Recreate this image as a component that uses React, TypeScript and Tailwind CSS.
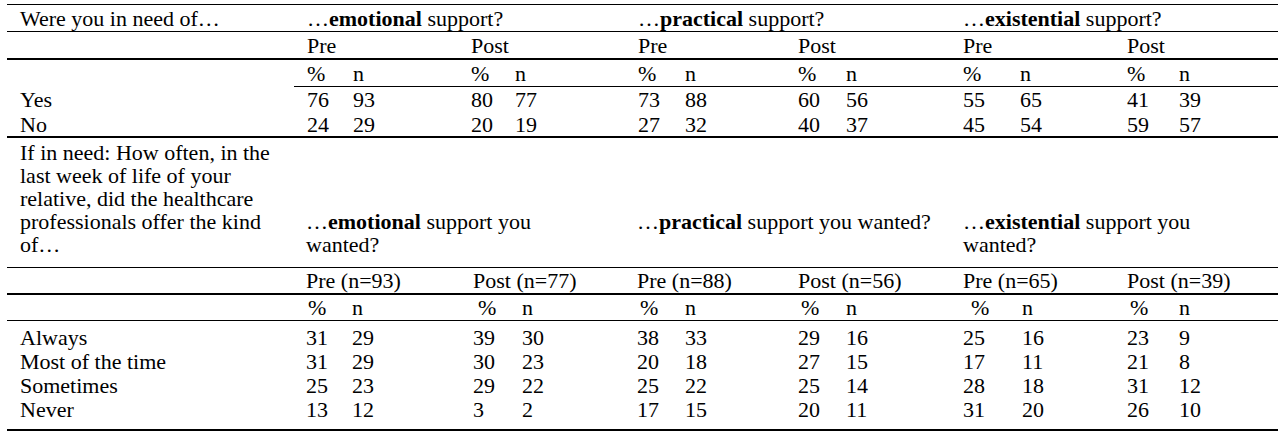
import React from "react";

const S1 =
  "grid grid-cols-[287px_46px_118px_44px_123px_47px_113px_48px_117px_57px_107px_52px_112px]";
const S2 =
  "grid grid-cols-[286px_46px_121px_49px_115px_48px_113px_48px_117px_59px_105px_52px_112px]";

const cell = "pl-[13px] whitespace-nowrap";

type Row = { label: string; vals: (string | number)[] };

const rows1: Row[] = [
  { label: "Yes", vals: [76, 93, 80, 77, 73, 88, 60, 56, 55, 65, 41, 39] },
  { label: "No", vals: [24, 29, 20, 19, 27, 32, 40, 37, 45, 54, 59, 57] },
];

const rows2: Row[] = [
  { label: "Always", vals: [31, 29, 39, 30, 38, 33, 29, 16, 25, 16, 23, 9] },
  { label: "Most of the time", vals: [31, 29, 30, 23, 20, 18, 27, 15, 17, 11, 21, 8] },
  { label: "Sometimes", vals: [25, 23, 29, 22, 25, 22, 25, 14, 28, 18, 31, 12] },
  { label: "Never", vals: [13, 12, 3, 2, 17, 15, 20, 11, 31, 20, 26, 10] },
];

const pctPad2 = [
  "pl-[15px]",
  "pl-[18px]",
  "pl-[16px]",
  "pl-[16px]",
  "pl-[21px]",
  "pl-[16px]",
];

export default function App() {
  return (
    <div className="min-h-screen w-full bg-white pl-[7px] pt-[4px] text-black font-['Liberation_Serif','Times_New_Roman',serif]">
      <div className="w-[1271px] border-t border-black text-[22px] leading-[23px]">
        {/* Section 1 */}
        <div className={`${S1} h-[27px] items-center border-b border-black`}>
          <div className={cell}>Were you in need of…</div>
          <div className={`${cell} col-span-4`}>
            …<span className="font-bold">emotional</span> support?
          </div>
          <div className={`${cell} col-span-4`}>
            …<span className="font-bold">practical</span> support?
          </div>
          <div className={`${cell} col-span-4`}>
            …<span className="font-bold">existential</span> support?
          </div>
        </div>
        <div className={`${S1} h-[28px] items-center border-b-2 border-black`}>
          <div className={cell}></div>
          {["Pre", "Post", "Pre", "Post", "Pre", "Post"].map((t, i) => (
            <div key={i} className={`${cell} col-span-2`}>
              {t}
            </div>
          ))}
        </div>
        <div className={`${S1} h-[27px]`}>
          <div className={cell}></div>
          {Array.from({ length: 6 }).map((_, i) => (
            <React.Fragment key={i}>
              <div className={`${cell} flex items-center border-b border-black`}>%</div>
              <div className={`${cell} flex items-center border-b border-black`}>n</div>
            </React.Fragment>
          ))}
        </div>
        <div className="border-b-2 border-black">
          {rows1.map((r, ri) => (
            <div
              key={r.label}
              className={`${S1} ${ri === 0 ? "h-[25px]" : "h-[24px]"} items-center`}
            >
              <div className={cell}>{r.label}</div>
              {r.vals.map((v, i) => (
                <div key={i} className={cell}>
                  {v}
                </div>
              ))}
            </div>
          ))}
        </div>

        {/* Section 2 */}
        <div className={`${S2} h-[130px] items-end border-b border-black pb-[11px]`}>
          <div className={`${cell} self-start pt-[3px]`}>
            <div className="w-[268px] whitespace-normal">
              If in need: How often, in the last week of life of your relative, did the
              healthcare professionals offer the kind of…
            </div>
          </div>
          <div className={`${cell} col-span-4`}>
            …<span className="font-bold">emotional</span> support you
            <br />
            wanted?
          </div>
          <div className={`${cell} col-span-4`}>
            <div>
              …<span className="font-bold">practical</span> support you wanted?
            </div>
            <div>&nbsp;</div>
          </div>
          <div className={`${cell} col-span-4`}>
            …<span className="font-bold">existential</span> support you
            <br />
            wanted?
          </div>
        </div>
        <div className={`${S2} h-[27px] items-center border-b-2 border-black`}>
          <div className={cell}></div>
          {[
            "Pre (n=93)",
            "Post (n=77)",
            "Pre (n=88)",
            "Post (n=56)",
            "Pre (n=65)",
            "Post (n=39)",
          ].map((t, i) => (
            <div key={i} className={`${cell} col-span-2`}>
              {t}
            </div>
          ))}
        </div>
        <div className={`${S2} h-[26px] items-center border-b border-black`}>
          <div className={cell}></div>
          {Array.from({ length: 6 }).map((_, i) => (
            <React.Fragment key={i}>
              <div className={`${pctPad2[i]} whitespace-nowrap`}>%</div>
              <div className={cell}>n</div>
            </React.Fragment>
          ))}
        </div>
        <div className="border-b-2 border-black pb-[8px] pt-[4px]">
          {rows2.map((r) => (
            <div key={r.label} className={`${S2} h-[24px] items-center`}>
              <div className={cell}>{r.label}</div>
              {r.vals.map((v, i) => (
                <div key={i} className={cell}>
                  {v}
                </div>
              ))}
            </div>
          ))}
        </div>
      </div>
    </div>
  );
}
